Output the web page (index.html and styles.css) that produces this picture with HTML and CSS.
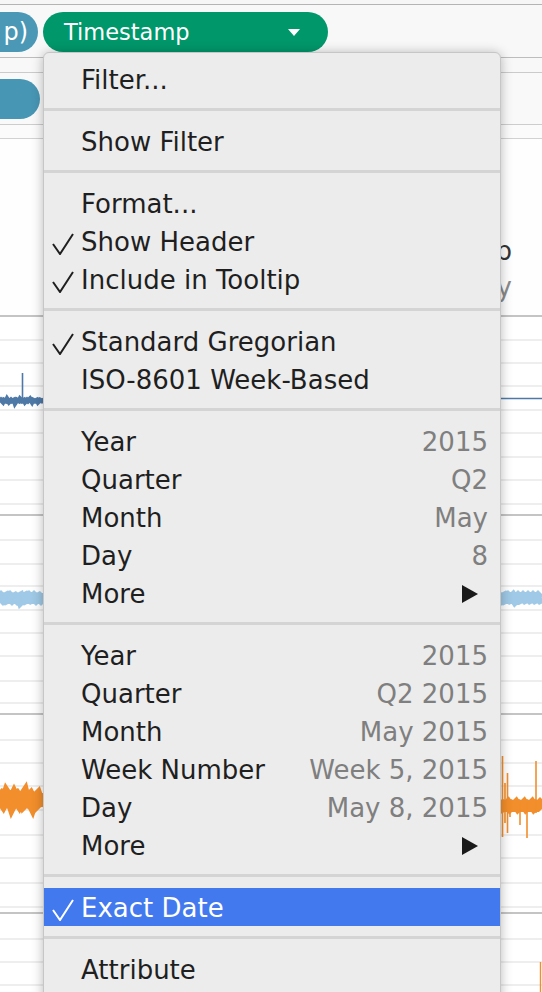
FILE: index.html
```html
<!DOCTYPE html>
<html>
<head>
<meta charset="utf-8">
<link rel="stylesheet" href="styles.css">
</head>
<body>
<div class="page">
  <div class="bar0"></div>
  <div class="shelf1">
    <div class="pill pill-blue"><span>p)</span></div>
    <div class="pill pill-green"><span>Timestamp</span><i class="caret"></i></div>
  </div>
  <div class="shelf2a"></div>
  <div class="shelf2"><div class="pill pill-blue2"></div></div>
  <div class="shelf3"></div>
  <div class="header">
    <div class="hdr-title">Timestamp</div>
    <div class="hdr-sub">Day</div>
  </div>
  <svg class="pane" width="542" height="199" viewBox="0 0 542 199">
    <rect x="0" y="0" width="542" height="2" fill="#c4c4c4"/>
    <g fill="#eeeeee">
      <rect x="0" y="24" width="542" height="2"/><rect x="0" y="47" width="542" height="2"/><rect x="0" y="70" width="542" height="2"/><rect x="0" y="94" width="542" height="2"/><rect x="0" y="117" width="542" height="2"/><rect x="0" y="141" width="542" height="2"/><rect x="0" y="164" width="542" height="2"/><rect x="0" y="188" width="542" height="2"/>
    </g>
    <path d="M0 86 L1 85 L3 87 L4 85 L6 86 L7 84 L9 87 L11 85 L12 86 L14 85 L15 88 L17 85 L19 86 L20 84 L22 86 L24 85 L25 87 L27 85 L28 86 L30 84 L32 87 L33 85 L35 86 L37 85 L38 87 L40 85 L42 86 L44 85" stroke="#4e79a7" stroke-width="5" fill="none"/>
    <path d="M22.5 58 L22.5 86" stroke="#4e79a7" stroke-width="1.6"/>
    <path d="M498 83.5 L542 83.5" stroke="#4e79a7" stroke-width="1.6"/>
  </svg>
  <svg class="pane" width="542" height="199" viewBox="0 0 542 199">
    <rect x="0" y="0" width="542" height="2" fill="#c4c4c4"/>
    <g fill="#eeeeee">
      <rect x="0" y="25" width="542" height="2"/><rect x="0" y="49" width="542" height="2"/><rect x="0" y="71" width="542" height="2"/><rect x="0" y="95" width="542" height="2"/><rect x="0" y="118" width="542" height="2"/><rect x="0" y="141" width="542" height="2"/><rect x="0" y="166" width="542" height="2"/><rect x="0" y="188" width="542" height="2"/>
    </g>
    <path d="M0 84 L1 83 L3 85 L4 84 L6 83 L7 85 L9 84 L10 83 L12 85 L13 84 L15 83 L17 85 L18 84 L20 83 L21 86 L23 84 L25 83 L26 85 L28 84 L29 83 L31 85 L33 84 L34 83 L36 85 L37 84 L39 83 L41 85 L42 84 L44 84" stroke="#9fc9e6" stroke-width="10" fill="none"/>
    <path d="M498 84 L499 83 L501 85 L502 84 L504 83 L505 85 L507 84 L508 83 L510 85 L512 84 L513 83 L515 86 L517 84 L518 83 L520 85 L522 84 L523 83 L525 85 L527 84 L528 83 L530 85 L532 84 L533 83 L535 85 L537 84 L538 83 L540 85 L542 84" stroke="#9fc9e6" stroke-width="10" fill="none"/>
  </svg>
  <svg class="pane" width="542" height="199" viewBox="0 0 542 199">
    <rect x="0" y="0" width="542" height="2" fill="#c4c4c4"/>
    <g fill="#eeeeee">
      <rect x="0" y="26" width="542" height="2"/><rect x="0" y="49" width="542" height="2"/><rect x="0" y="72" width="542" height="2"/><rect x="0" y="96" width="542" height="2"/><rect x="0" y="121" width="542" height="2"/><rect x="0" y="144" width="542" height="2"/><rect x="0" y="169" width="542" height="2"/><rect x="0" y="193" width="542" height="2"/>
    </g>
    <path d="M0 86 L1 85 L3 88 L4 86 L6 87 L7 84 L9 87 L11 86 L12 89 L14 85 L15 87 L17 85 L19 88 L20 86 L22 87 L24 84 L25 88 L27 86 L28 87 L30 85 L32 89 L33 86 L35 87 L37 85 L38 88 L40 86 L42 87 L44 86" stroke="#f28e2b" stroke-width="13" fill="none"/>
    <path d="M498 93 L500 92 L502 94 L504 92 L506 93 L508 91 L510 94 L512 92 L514 93 L516 91 L518 94 L520 92 L522 93 L524 91 L526 94 L528 92 L530 93 L532 91 L534 94 L536 92 L538 93 L540 91 L542 93" stroke="#f28e2b" stroke-width="10" fill="none"/>
    <path d="M502.5 43 L502.5 124 M505 70 L505 110 M507.5 60 L507.5 120 M510 88 L510 104 M520 90 L520 112 M527 90 L527 125 M536 48 L536 100" stroke="#f28e2b" stroke-width="1.6" fill="none"/>
  </svg>
  <svg class="pane" width="542" height="199" viewBox="0 0 542 199">
    <rect x="0" y="0" width="542" height="2" fill="#c4c4c4"/>
    <g fill="#eeeeee">
      <rect x="0" y="26" width="542" height="2"/><rect x="0" y="49" width="542" height="2"/><rect x="0" y="72" width="542" height="2"/><rect x="0" y="96" width="542" height="2"/>
    </g>
    <path d="M540.5 50 L540.5 80" stroke="#f28e2b" stroke-width="1.4"/>
  </svg>

  <div class="menu">
    <div class="row"><span class="chk"></span><span class="lbl">Filter...</span></div>
    <div class="sep"></div>
    <div class="row"><span class="chk"></span><span class="lbl">Show Filter</span></div>
    <div class="sep"></div>
    <div class="row"><span class="chk"></span><span class="lbl">Format...</span></div>
    <div class="row"><span class="chk"><svg width="22" height="22" viewBox="0 0 22 22"><path d="M1 11 L8 21 L21 1" stroke="currentColor" stroke-width="2" fill="none"/></svg></span><span class="lbl">Show Header</span></div>
    <div class="row"><span class="chk"><svg width="22" height="22" viewBox="0 0 22 22"><path d="M1 11 L8 21 L21 1" stroke="currentColor" stroke-width="2" fill="none"/></svg></span><span class="lbl">Include in Tooltip</span></div>
    <div class="sep"></div>
    <div class="row"><span class="chk"><svg width="22" height="22" viewBox="0 0 22 22"><path d="M1 11 L8 21 L21 1" stroke="currentColor" stroke-width="2" fill="none"/></svg></span><span class="lbl">Standard Gregorian</span></div>
    <div class="row"><span class="chk"></span><span class="lbl">ISO-8601 Week-Based</span></div>
    <div class="sep"></div>
    <div class="row"><span class="chk"></span><span class="lbl">Year</span><span class="val">2015</span></div>
    <div class="row"><span class="chk"></span><span class="lbl">Quarter</span><span class="val">Q2</span></div>
    <div class="row"><span class="chk"></span><span class="lbl">Month</span><span class="val">May</span></div>
    <div class="row"><span class="chk"></span><span class="lbl">Day</span><span class="val">8</span></div>
    <div class="row"><span class="chk"></span><span class="lbl">More</span><span class="val"><i class="arrow"></i></span></div>
    <div class="sep"></div>
    <div class="row"><span class="chk"></span><span class="lbl">Year</span><span class="val">2015</span></div>
    <div class="row"><span class="chk"></span><span class="lbl">Quarter</span><span class="val">Q2 2015</span></div>
    <div class="row"><span class="chk"></span><span class="lbl">Month</span><span class="val">May 2015</span></div>
    <div class="row"><span class="chk"></span><span class="lbl">Week Number</span><span class="val">Week 5, 2015</span></div>
    <div class="row"><span class="chk"></span><span class="lbl">Day</span><span class="val">May 8, 2015</span></div>
    <div class="row"><span class="chk"></span><span class="lbl">More</span><span class="val"><i class="arrow"></i></span></div>
    <div class="sep"></div>
    <div class="row active"><span class="chk"><svg width="22" height="22" viewBox="0 0 22 22"><path d="M1 11 L8 21 L21 1" stroke="currentColor" stroke-width="2" fill="none"/></svg></span><span class="lbl">Exact Date</span></div>
    <div class="sep"></div>
    <div class="row"><span class="chk"></span><span class="lbl">Attribute</span></div>
  </div>
</div>
</body>
</html>
```

FILE: styles.css
```css
html, body {
  margin: 0;
  padding: 0;
  background: #ffffff;
}
.page {
  position: relative;
  width: 542px;
  height: 992px;
  overflow: hidden;
  background: #ffffff;
  font-family: "DejaVu Sans", "Liberation Sans", sans-serif;
}
.bar0 {
  height: 4px;
  background: #f6f6f6;
  border-bottom: 1px solid #b4b4b4;
}
.shelf1 {
  height: 53px;
  box-sizing: border-box;
  padding-top: 7px;
  background: #f8f8f8;
  border-bottom: 1px solid #bdbdbd;
  display: flex;
  align-items: flex-start;
  gap: 5px;
}
.pill {
  height: 40px;
  border-radius: 20px;
  display: flex;
  align-items: center;
  color: #ffffff;
  white-space: nowrap;
  font-size: 22px;
  box-sizing: border-box;
}
.pill-blue {
  width: 110px;
  margin-left: -72px;
  background: #4a98b6;
  justify-content: flex-end;
  padding-right: 10px;
  font-size: 24px;
  overflow: hidden;
}
.pill-green {
  width: 285px;
  background: #00976a;
  padding-left: 21px;
  padding-right: 28px;
  font-size: 22.5px;
}
.caret {
  margin-left: auto;
  width: 0;
  height: 0;
  border-left: 6px solid transparent;
  border-right: 6px solid transparent;
  border-top: 7px solid #ffffff;
}
.shelf2a {
  height: 14px;
  background: #f8f8f8;
  border-bottom: 1px solid #cbcbcb;
}
.shelf2 {
  height: 52px;
  box-sizing: border-box;
  padding-top: 6px;
  background: #f9f9f9;
  border-bottom: 1px solid #cdcdcd;
}
.pill-blue2 {
  width: 100px;
  margin-left: -60px;
  background: #4796b4;
}
.shelf3 {
  height: 13px;
  background: #fbfbfb;
  border-bottom: 1px solid #d2d2d2;
}
.header {
  height: 176px;
  box-sizing: border-box;
  padding-top: 94px;
  padding-right: 30px;
  display: flex;
  flex-direction: column;
  align-items: flex-end;
  font-size: 26px;
  line-height: 36px;
  background: #fefefe;
}
.hdr-title { color: #333333; }
.hdr-sub { color: #8a8a8a; }
.pane {
  display: block;
}

.menu {
  position: absolute;
  left: 43px;
  top: 52px;
  width: 458px;
  height: 980px;
  box-sizing: border-box;
  background: #ececec;
  border: 1px solid #c6c6c6;
  border-radius: 6px 6px 0 0;
  box-shadow: 0 1px 12px rgba(0, 0, 0, 0.28);
  padding-top: 7px;
  font-size: 26px;
  color: #1f1f1f;
}
.row {
  height: 38px;
  box-sizing: border-box;
  padding-top: 2px;
  padding-right: 12px;
  line-height: 36px;
  display: grid;
  grid-template-columns: 37px 1fr auto;
  align-items: start;
  white-space: nowrap;
}
.chk {
  display: flex;
  padding-left: 8px;
  padding-top: 9px;
  color: #1f1f1f;
}
.val {
  color: #7f7f7f;
  display: flex;
  align-items: center;
  height: 36px;
}
.arrow {
  display: block;
  width: 0;
  height: 0;
  margin-right: 10px;
  border-top: 9.5px solid transparent;
  border-bottom: 9.5px solid transparent;
  border-left: 16px solid #1a1a1a;
}
.row.active {
  background: #4279ef;
  color: #ffffff;
}
.row.active .chk { color: #ffffff; }
.sep {
  height: 3px;
  margin: 10px 0 11px;
  background: #d4d4d4;
}
```
